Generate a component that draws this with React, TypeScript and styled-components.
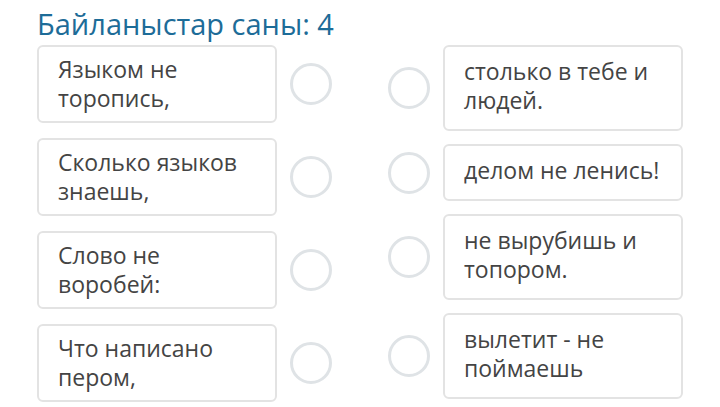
import styled, { createGlobalStyle } from 'styled-components';

const GlobalStyle = createGlobalStyle`
  html, body {
    margin: 0;
    padding: 0;
    background: #FFF;
  }
  body {
    font-family: "Open Sans", "Noto Sans", sans-serif;
  }
`;

const Page = styled.div`
  padding: 4px 0 0 37px;
`;

const Title = styled.h1`
  margin: 0 0 2px;
  font-size: 29px;
  font-weight: 400;
  line-height: 39px;
  color: #1d6c98;
`;

const Board = styled.div`
  display: flex;
  align-items: flex-start;
  gap: 56px;
`;

const Column = styled.div<{ $gap: number }>`
  display: flex;
  flex-direction: column;
  gap: ${p => p.$gap}px;
`;

const Row = styled.div`
  display: flex;
  align-items: center;
  gap: 13px;
`;

const Card = styled.div<{ $side: 'left' | 'right' }>`
  box-sizing: border-box;
  width: 240px;
  border: 2px solid #e3e3e3;
  border-radius: 6px;
  padding: ${p => (p.$side === 'left' ? '8px 19px 8px 19px' : '10px 19px 14px 19px')};
  font-size: 23px;
  line-height: 29px;
  color: #444;
`;

const Slot = styled.span`
  box-sizing: border-box;
  flex: none;
  width: 42px;
  height: 42px;
  border: 3px solid #dfe3e6;
  border-radius: 50%;
`;

const leftItems = ['Языком не торопись,', 'Сколько языков знаешь,', 'Слово не воробей:', 'Что написано пером,'];
const rightItems = ['столько в тебе и людей.', 'делом не ленись!', 'не вырубишь и топором.', 'вылетит - не поймаешь'];

const App = () => {
  return (
    <Page>
      <GlobalStyle />
      <Title>Байланыстар саны: 4</Title>
      <Board>
        <Column $gap={15}>
          {leftItems.map(text => (
            <Row key={text}>
              <Card $side="left">{text}</Card>
              <Slot />
            </Row>
          ))}
        </Column>
        <Column $gap={13}>
          {rightItems.map(text => (
            <Row key={text}>
              <Slot />
              <Card $side="right">{text}</Card>
            </Row>
          ))}
        </Column>
      </Board>
    </Page>
  );
};

export default App;
